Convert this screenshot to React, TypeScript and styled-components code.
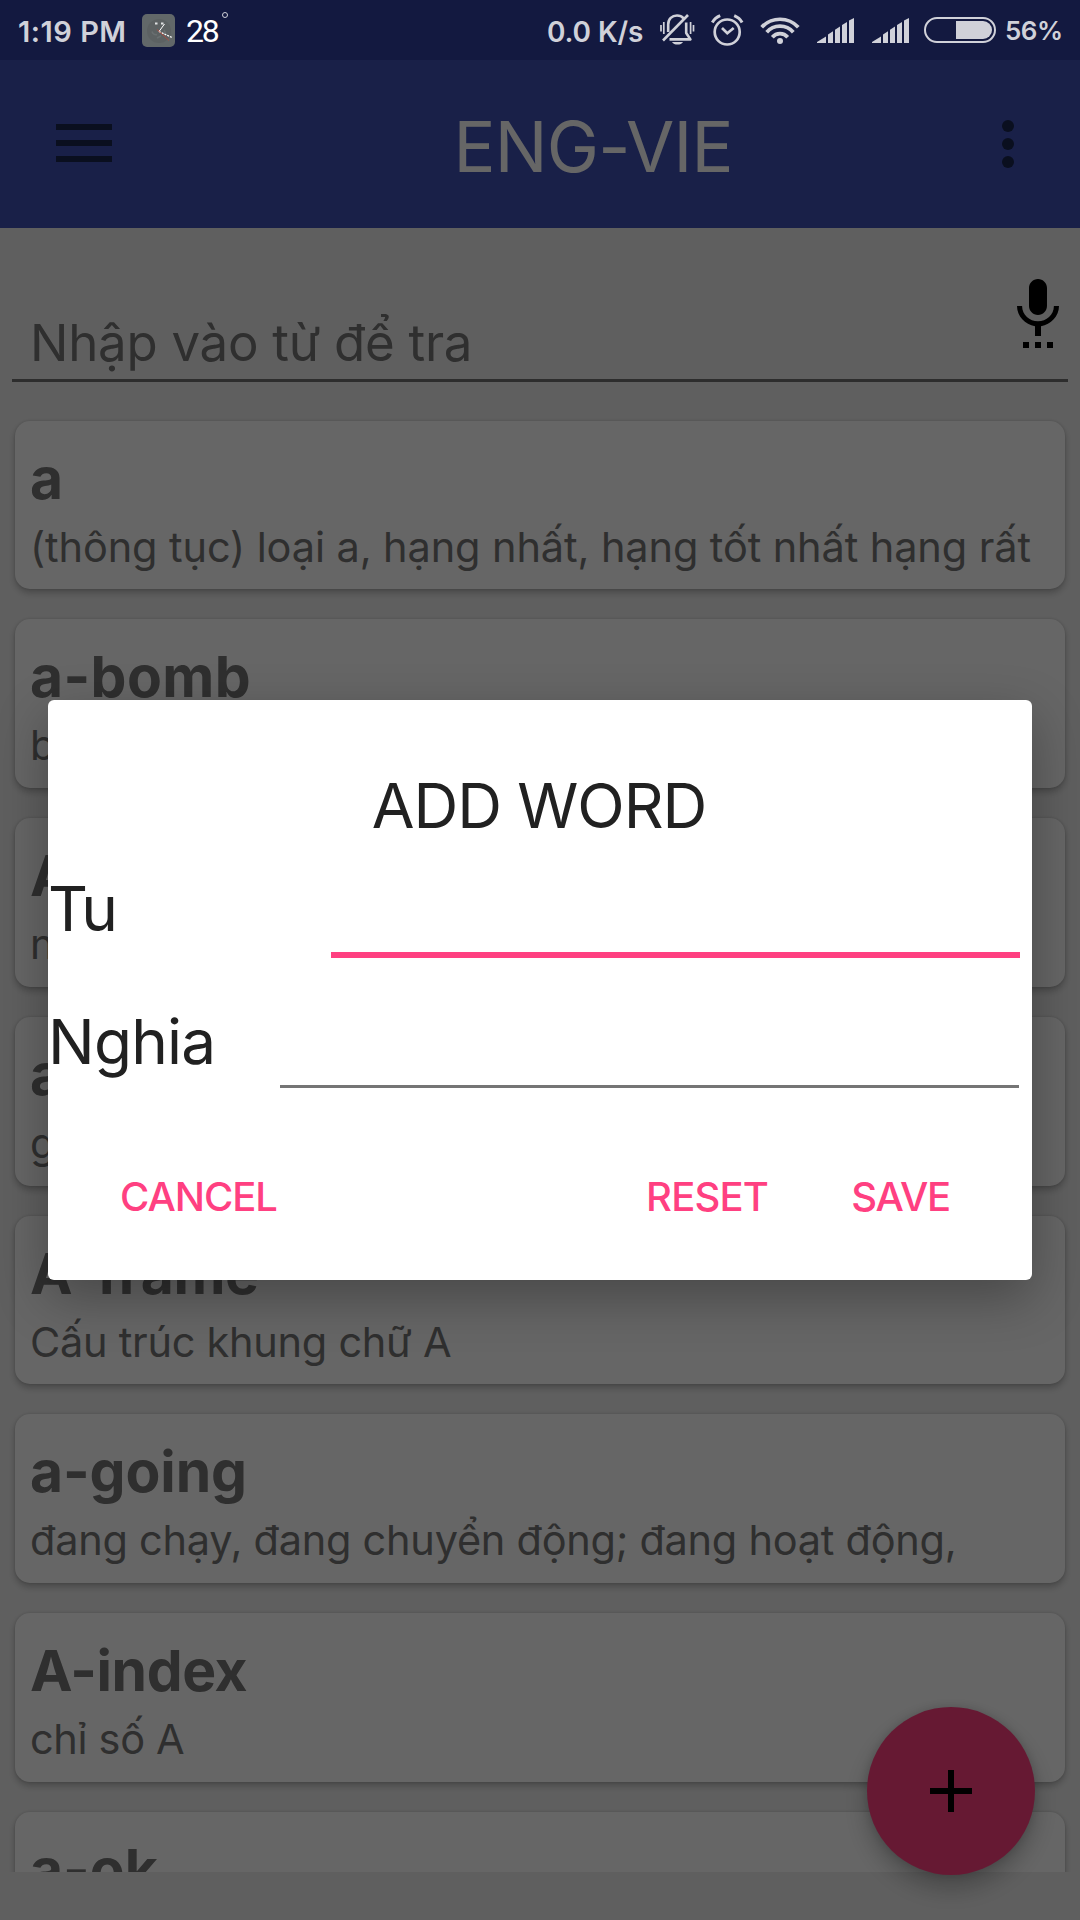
import React from "react";
import styled, { createGlobalStyle, css } from "styled-components";

const GlobalStyle = createGlobalStyle`
  * { box-sizing: border-box; }
  html, body { margin: 0; padding: 0; background: #5f5f5f; }
  body { font-family: Inter, "Noto Sans", sans-serif; overflow: hidden; }
`;

const Screen = styled.div`
  position: relative;
  width: 1080px;
  height: 1920px;
  overflow: hidden;
  display: flex;
  flex-direction: column;
  background: #eeeeee;
`;

/* Status bar: sits above the scrim and keeps its own tones */
const StatusBar = styled.header`
  position: relative;
  z-index: 3;
  flex: none;
  height: 60px;
  padding: 0 17px 0 18px;
  display: flex;
  align-items: center;
  justify-content: space-between;
  background: #131940;
  color: #d0d1d9;
`;

const StatusGroup = styled.div`
  display: flex;
  align-items: center;
  height: 60px;
`;

const StatusText = styled.span<{ $width: number; $size: number; $tracking: number; $lift?: number; $ml?: number }>`
  flex: none;
  width: ${(p) => p.$width}px;
  margin-left: ${(p) => p.$ml ?? 0}px;
  padding-top: ${(p) => 4 - (p.$lift ?? 0)}px;
  font-size: ${(p) => p.$size}px;
  line-height: 36px;
  font-weight: 600;
  letter-spacing: ${(p) => p.$tracking}px;
  white-space: nowrap;
`;

const Temperature = styled.span`
  display: flex;
  align-items: flex-start;
  margin-left: 11px;
  padding-top: 1px;
  font-family: Roboto, sans-serif;
  font-size: 32px;
  line-height: 38px;
  letter-spacing: -2.2px;
  color: #ffffff;
`;

const DegreeRing = styled.i`
  width: 6px;
  height: 6px;
  margin: 0 0 0 4px;
  border: 1.5px solid #d0d1d9;
  border-radius: 50%;
`;

const StatusIcon = styled.svg<{ $ml: number }>`
  flex: none;
  display: block;
  margin-left: ${(p) => p.$ml}px;
`;

const Toolbar = styled.div`
  flex: none;
  height: 168px;
  padding: 0 66px 0 56px;
  display: flex;
  align-items: center;
  background: #3f51b5;
`;

const MenuButton = styled.div`
  width: 56px;
  height: 38px;
  display: flex;
  flex-direction: column;
  justify-content: space-between;
  margin-top: -2px;
`;

const MenuLine = styled.i`
  height: 6px;
  background: #19264e;
`;

const ToolbarTitle = styled.h1`
  margin: 5px 0 0 341.5px;
  font-size: 70px;
  line-height: 84px;
  font-weight: 400;
  letter-spacing: -0.78px;
  color: #ffffff;
`;

const OverflowButton = styled.div`
  width: 12px;
  height: 48px;
  margin-left: auto;
  display: flex;
  flex-direction: column;
  justify-content: space-between;
`;

const Dot = styled.i`
  width: 12px;
  height: 12px;
  border-radius: 50%;
  background: #19264e;
`;

const SearchField = styled.div`
  flex: none;
  height: 154px;
  margin: 0 12px;
  display: flex;
  justify-content: space-between;
  border-bottom: 3px solid #707070;
`;

const SearchHint = styled.span`
  margin: 85px 0 0 18px;
  font-size: 51px;
  line-height: 60px;
  letter-spacing: -0.28px;
  color: #757575;
`;

const MicIcon = styled.svg`
  display: block;
  margin: 48px -6px 0 0;
`;

const WordList = styled.main`
  flex: none;
  height: 1490px;
  padding: 38.6px 15px 0;
  display: flex;
  flex-direction: column;
  gap: 30px;
  overflow: hidden;
`;

const WordCard = styled.article`
  flex: none;
  height: 168.75px;
  padding: 24px 14px 0 15px;
  border-radius: 15px;
  background: #ffffff;
  box-shadow: 0 4px 7px rgba(0, 0, 0, 0.24), 0 0 3px rgba(0, 0, 0, 0.14);
  color: #757575;
`;

const Word = styled.h2<{ $tracking: number }>`
  margin: 0;
  font-size: 57px;
  line-height: 68px;
  font-weight: 700;
  letter-spacing: ${(p) => p.$tracking}px;
`;

const Meaning = styled.p<{ $tracking: number }>`
  margin: 9px 0 0;
  font-size: 41.5px;
  line-height: 50px;
  letter-spacing: ${(p) => p.$tracking}px;
  white-space: nowrap;
`;

const AddButton = styled.div`
  position: absolute;
  right: 45px;
  bottom: 45px;
  width: 168px;
  height: 168px;
  border-radius: 50%;
  display: flex;
  align-items: center;
  justify-content: center;
  background: #ff4081;
  box-shadow: 0 13px 24px rgba(0, 0, 0, 0.26), 0 0 10px rgba(0, 0, 0, 0.14);
`;

const Scrim = styled.div`
  position: absolute;
  inset: 0;
  z-index: 2;
  padding: 700px 48px 0;
  background: rgba(0, 0, 0, 0.6);
`;

const Dialog = styled.section`
  height: 580px;
  padding-top: 69px;
  display: flex;
  flex-direction: column;
  border-radius: 6px;
  background: #ffffff;
  color: #212121;
  box-shadow: 0 18px 52px rgba(0, 0, 0, 0.3);
`;

const DialogTitle = styled.h3`
  margin: 0 0 -1px;
  padding-right: 2px;
  font-size: 62px;
  line-height: 74px;
  font-weight: 400;
  letter-spacing: -1.05px;
  text-align: center;
`;

const FieldRow = styled.label`
  height: 133px;
  display: flex;
`;

const FieldLabel = styled.span<{ $width: number; $tracking: number }>`
  flex: none;
  width: ${(p) => p.$width}px;
  font-size: 62px;
  line-height: 133px;
  letter-spacing: ${(p) => p.$tracking}px;
`;

const FieldInput = styled.span<{ $active?: boolean }>`
  flex: 1;
  ${(p) =>
    p.$active
      ? css`
          margin: 0 12px 17px 0;
          border-bottom: 6px solid #ff4081;
        `
      : css`
          margin: 0 13px 20px 0;
          border-bottom: 3px solid #757575;
        `}
`;

const DialogActions = styled.div`
  height: 120px;
  margin-top: 29px;
  padding: 0 82px 0 72px;
  display: flex;
  align-items: center;
`;

const ActionButton = styled.button<{ $ml?: string; $tracking: number }>`
  margin: 0 0 0 ${(p) => p.$ml ?? "0"};
  padding: 0;
  border: 0;
  background: none;
  font: 500 40px/120px Inter, sans-serif;
  letter-spacing: ${(p) => p.$tracking}px;
  color: #ff4081;
`;

interface Entry {
  word: string;
  meaning: string;
  wordTracking: number;
  meaningTracking: number;
}

const entries: Entry[] = [
  { word: "a", meaning: "(thông tục) loại a, hạng nhất, hạng tốt nhất hạng rất", wordTracking: 0, meaningTracking: -0.11 },
  { word: "a-bomb", meaning: "bom nguyên tử", wordTracking: 0.4, meaningTracking: -0.3 },
  { word: "A-bomb", meaning: "như atom bomb", wordTracking: -0.4, meaningTracking: -0.3 },
  { word: "a-cock", meaning: "gà trống", wordTracking: 0, meaningTracking: -0.3 },
  { word: "A-frame", meaning: "Cấu trúc khung chữ A", wordTracking: -0.4, meaningTracking: -0.27 },
  { word: "a-going", meaning: "đang chạy, đang chuyển động; đang hoạt động,", wordTracking: -0.1, meaningTracking: -0.26 },
  { word: "A-index", meaning: "chỉ số A", wordTracking: -0.4, meaningTracking: -0.35 },
  { word: "a-ok", meaning: "", wordTracking: 0, meaningTracking: 0 },
];

const WeatherClock = () => (
  <StatusIcon $ml={13} width="33" height="33" viewBox="0 0 33 33">
    <rect width="33" height="33" rx="5" fill="#626869" />
    <circle cx="17" cy="17" r="12" fill="#5c6162" />
    <path d="M10 17.500a4 4 0 0 0 5 3M22 16a5 5 0 0 1 1 4M15 24l4-2" stroke="#696f70" strokeWidth="1.500" fill="none" />
    <path d="M13 9.500h2.500M19 9.500h2.500" stroke="#dfe2e2" strokeWidth="2" />
    <path d="M17 17.500L22.500 10" stroke="#ffffff" strokeWidth="1" />
    <path d="M17 17.500L30 23.500" stroke="#ffffff" strokeWidth="1.200" strokeDasharray="2 1" />
    <path d="M15 15.500L27 26.500" stroke="#c9402f" strokeWidth="0.700" />
  </StatusIcon>
);

const BellOff = () => (
  <StatusIcon $ml={16} width="35" height="32" viewBox="0 0 35 32" fill="none" stroke="currentColor">
    <path d="M8.200 18V10.500C8.200 5 12 1.500 17 1.500c2.600 0 5 1 6.600 2.800" strokeWidth="2.600" />
    <path d="M26.200 8.500V19l4.200 6.400H9.500" strokeWidth="2.600" strokeLinejoin="round" />
    <path d="M3 26.500L28 1" strokeWidth="2.600" />
    <path d="M1 11v6.500M3.800 8v12M30.600 8v12M33.500 11v6.500" strokeWidth="1.700" />
    <path d="M12 28h11c-1.400 3.400-9.600 3.400-11 0z" fill="currentColor" stroke="none" />
  </StatusIcon>
);

const Alarm = () => (
  <StatusIcon $ml={16} width="33" height="32" viewBox="0 0 33 32" fill="none" stroke="currentColor">
    <circle cx="16.200" cy="18" r="12.500" strokeWidth="2.700" />
    <path d="M11 14l5.300 5.200L22.700 14" strokeWidth="2.700" />
    <path d="M1.300 8.500Q3.800 3.800 9.200 1.600M23.200 1.600q5.400 2.200 7.900 6.900" strokeWidth="3" />
  </StatusIcon>
);

const Wifi = () => (
  <StatusIcon $ml={16} width="40" height="29" viewBox="0 0 40 29" fill="none" stroke="currentColor">
    <g strokeWidth="3.700">
      <path d="M1.700 11.200A25 25 0 0 1 38.300 11.200" />
      <path d="M6.700 16.200A17.500 17.500 0 0 1 33.300 16.200" />
      <path d="M12.300 21.200A10 10 0 0 1 27.700 21.200" />
    </g>
    <circle cx="20" cy="25" r="3" fill="currentColor" stroke="none" />
  </StatusIcon>
);

const Signal = ({ ml }: { ml: number }) => (
  <StatusIcon $ml={ml} width="37" height="25" viewBox="0 0 37 25" fill="currentColor">
    <path d="M0 25v-1L9 18.500V25zM11 25V16.500l5-3.200V25zM18 25V11.800l5-3.200V25zM25 25V7l5-3V25zM32 25V2.500L37 0V25z" />
  </StatusIcon>
);

const Battery = () => (
  <StatusIcon $ml={15} width="72" height="26" viewBox="0 0 72 26">
    <rect x="1" y="1" width="70" height="24" rx="12" fill="none" stroke="currentColor" strokeWidth="2" />
    <path d="M32 4h27a9 9 0 0 1 0 18H32z" fill="currentColor" />
  </StatusIcon>
);

export default function App() {
  return (
    <>
      <GlobalStyle />
      <Screen>
        <StatusBar>
          <StatusGroup>
            <StatusText $width={111} $size={29} $tracking={0.5}>1:19 PM</StatusText>
            <WeatherClock />
            <Temperature>
              28
              <DegreeRing />
            </Temperature>
          </StatusGroup>
          <StatusGroup>
            <StatusText $width={97} $size={28} $tracking={-0.11}>0.0 K/s</StatusText>
            <BellOff />
            <Alarm />
            <Wifi />
            <Signal ml={17} />
            <Signal ml={18} />
            <Battery />
            <StatusText $width={58} $size={26} $tracking={-0.49} $lift={2} $ml={9}>56%</StatusText>
          </StatusGroup>
        </StatusBar>

        <Toolbar>
          <MenuButton>
            <MenuLine />
            <MenuLine />
            <MenuLine />
          </MenuButton>
          <ToolbarTitle>ENG-VIE</ToolbarTitle>
          <OverflowButton>
            <Dot />
            <Dot />
            <Dot />
          </OverflowButton>
        </Toolbar>

        <SearchField>
          <SearchHint>Nhập vào từ để tra</SearchHint>
          <MicIcon width="72" height="72" viewBox="0 0 24 24">
            <path d="M7 24h2v-2H7v2zm5-11c1.660 0 2.990-1.340 2.990-3L15 4c0-1.660-1.340-3-3-3S9 2.340 9 4v6c0 1.660 1.340 3 3 3zm-1 11h2v-2h-2v2zm4 0h2v-2h-2v2zm4-14h-1.700c0 3-2.540 5.100-5.300 5.100S6.700 13 6.700 10H5c0 3.410 2.720 6.230 6 6.720V20h2v-3.280c3.280-.49 6-3.310 6-6.720z" />
          </MicIcon>
        </SearchField>

        <WordList>
          {entries.map((entry) => (
            <WordCard key={entry.word}>
              <Word $tracking={entry.wordTracking}>{entry.word}</Word>
              <Meaning $tracking={entry.meaningTracking}>{entry.meaning}</Meaning>
            </WordCard>
          ))}
        </WordList>

        <AddButton>
          <svg width="42" height="42" viewBox="0 0 42 42">
            <path d="M18 0h6v18h18v6H24v18h-6V24H0v-6h18z" />
          </svg>
        </AddButton>

        <Scrim>
          <Dialog>
            <DialogTitle>ADD WORD</DialogTitle>
            <FieldRow>
              <FieldLabel $width={283} $tracking={-2.1}>Tu</FieldLabel>
              <FieldInput $active />
            </FieldRow>
            <FieldRow>
              <FieldLabel $width={232} $tracking={-0.8}>Nghia</FieldLabel>
              <FieldInput />
            </FieldRow>
            <DialogActions>
              <ActionButton $tracking={-1.05}>CANCEL</ActionButton>
              <ActionButton $ml="auto" $tracking={-0.8}>RESET</ActionButton>
              <ActionButton $ml="83px" $tracking={-1.2}>SAVE</ActionButton>
            </DialogActions>
          </Dialog>
        </Scrim>
      </Screen>
    </>
  );
}
